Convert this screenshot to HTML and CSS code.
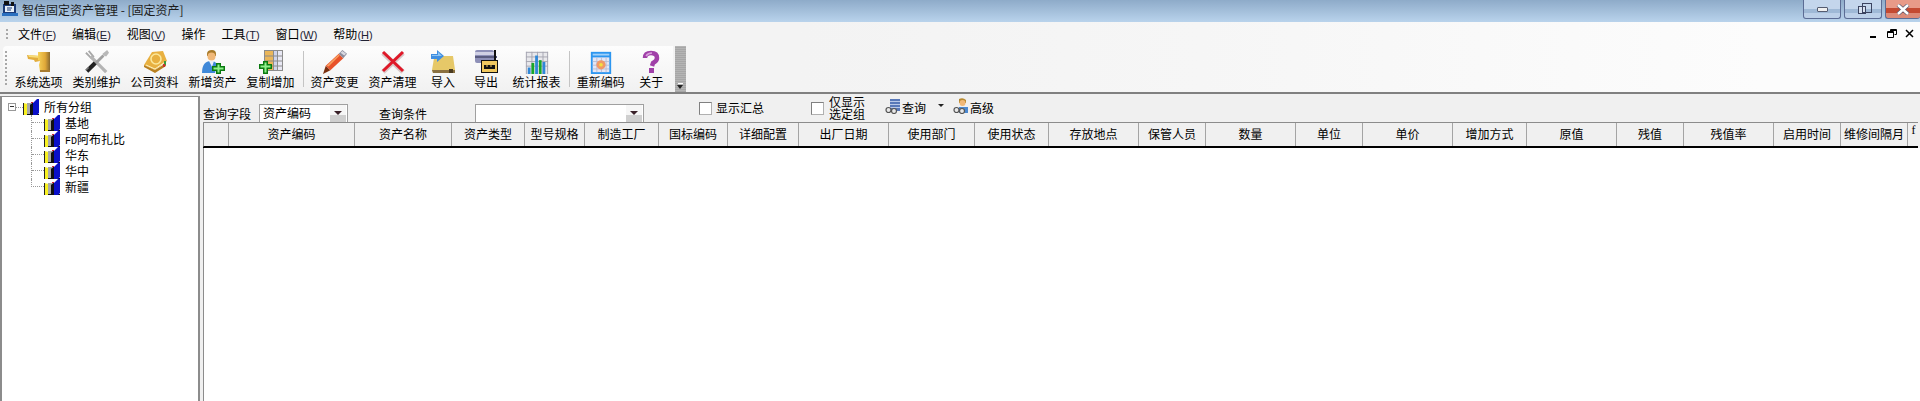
FILE: index.html
```html
<!DOCTYPE html>
<html lang="zh-CN">

<head>
    <meta charset="UTF-8">
    <title>智信固定资产管理 - [固定资产]</title>
    <link rel="stylesheet" href="styles.css">
</head>

<body>
    <svg class="defs" width="0" height="0">
        <defs>
            <linearGradient id="gold" x1="0" x2="1" y1="0" y2="0">
                <stop offset="0" stop-color="#f6d25a"/>
                <stop offset="0.6" stop-color="#e0a838"/>
                <stop offset="1" stop-color="#8a6a30"/>
            </linearGradient>
            <symbol id="i-hammer" viewBox="0 0 24 24">
                <path d="M0 5 L13 6 L13 11 L8 12 L7 10 L1 9 Z" fill="#e2ad3e"/>
                <path d="M1 5 L13 6 L13 8 L2 7 Z" fill="#f7dd7a"/>
                <path d="M11 2 H23 V22 H13 L12 15 L13 11 L11 10 Z" fill="url(#gold)"/>
                <path d="M13 20 H23 V22 H13 Z" fill="#a87c30"/>
            </symbol>
            <symbol id="i-tools" viewBox="0 0 26 26">
                <path d="M4 1 L9 7 L7 9 L1 3" fill="none" stroke="#a8a8a8" stroke-width="2"/>
                <path d="M6 7 L23 24" stroke="#b4b4b4" stroke-width="3.5"/>
                <path d="M24 0 L26 3 L23 7 L20 6 L19 4 Z" fill="#b8b8b8"/>
                <path d="M20 6 L11 15" stroke="#a0a0a0" stroke-width="3"/>
                <path d="M11 14 L2 23" stroke="#222" stroke-width="4.5"/>
                <path d="M4 19 L1 22" stroke="#777" stroke-width="1.5"/>
            </symbol>
            <symbol id="i-book" viewBox="0 0 24 24">
                <path d="M1 15 L9 2 L20 1 L24 11 L12 20 Z" fill="#e8b040"/>
                <path d="M1 15 L12 20 L23 13 L23 16 L12 23 L1 17 Z" fill="#b98020"/>
                <circle cx="13" cy="9" r="5" fill="none" stroke="#fbe79a" stroke-width="1.6"/>
                <path d="M3 15 L12 19 L22 12" fill="none" stroke="#fff3c0"/>
                <path d="M22 11 V15" stroke="#3a9a3a" stroke-width="2"/>
                <path d="M21 14 V17" stroke="#c83030" stroke-width="2"/>
            </symbol>
            <symbol id="i-user-add" viewBox="0 0 24 24">
                <path d="M6 4 Q6 0 11 0 Q15 0 15 4 L15 6 H6 Z" fill="#a87a28"/>
                <circle cx="10.500" cy="6.500" r="4" fill="#f0b878"/>
                <path d="M1 23 Q1 11 10 11 Q15 11 16 15 L14 23 Z" fill="#3f88d8"/>
                <path d="M8 11 L11 17 L13 11 Z" fill="#e8eef8"/>
                <path d="M15 13 H20 V16 H24 V21 H20 V24 H15 V21 H11 V16 H15 Z" fill="#0a7a10"/>
                <path d="M16.500 14.500 H18.500 V17.500 H22.500 V19.500 H18.500 V22.500 H16.500 V19.500 H12.500 V17.500 H16.500 Z" fill="#8ef08a"/>
            </symbol>
            <symbol id="i-copy-add" viewBox="0 0 24 24">
                <rect x="5" y="0" width="19" height="21" fill="#8c8c8c"/>
                <rect x="6" y="1" width="8" height="19" fill="#eab65a"/>
                <rect x="15" y="1" width="3" height="19" fill="#cfd4ec"/>
                <rect x="19" y="1" width="4" height="19" fill="#e8e8f4"/>
                <path d="M6 6 H23 M6 11 H23 M6 16 H23" stroke="#8c8c8c"/>
                <path d="M4 11 H9 V14 H13 V19 H9 V24 H4 V19 H0 V14 H4 Z" fill="#0a7a10"/>
                <path d="M5.500 12.500 H7.500 V15.500 H11.500 V17.500 H7.500 V22.500 H5.500 V17.500 H1.500 V15.500 H5.500 Z" fill="#8ef08a"/>
            </symbol>
            <symbol id="i-pen" viewBox="0 0 26 26">
                <path d="M0 26 L3 17 L8 22 Z" fill="#7a3010"/>
                <path d="M3 17 L17 4 L22 9 L8 22 Z" fill="#e8522a"/>
                <path d="M4 17 L17 5 L18 6 L6 18 Z" fill="#f8a060"/>
                <path d="M17 4 L21 0 L26 4 L22 9 Z" fill="#8c8c9c"/>
                <path d="M21 1 L25 4 L23 6 L19 3 Z" fill="#d8d8e0"/>
            </symbol>
            <symbol id="i-cross" viewBox="0 0 24 24">
                <path d="M2 3 L22 22 M22 3 L2 22" stroke="#d8c8c8" stroke-width="5"/>
                <path d="M2 2 L22 21 M22 2 L2 21" stroke="#e01828" stroke-width="3"/>
            </symbol>
            <symbol id="i-import" viewBox="0 0 24 24">
                <path d="M1 20 L3 8 H10 L12 6 H22 L24 20 V23 H2 Z" fill="#e6c868"/>
                <path d="M1 20 H24 V23 H2 Z" fill="#8a7040"/>
                <path d="M18 19 H22 V23 H18 Z" fill="#4a3a20"/>
                <path d="M0 4 H6 V0 L13 6 L6 12 V9 H0 Z" fill="#3f8ee0"/>
                <path d="M1 5 H7 V2 L11 6 L1 6 Z" fill="#8cc4f4"/>
            </symbol>
            <symbol id="i-export" viewBox="0 0 24 24">
                <rect x="1" y="0" width="19" height="13" rx="2" fill="#8e90b8"/>
                <rect x="1" y="2" width="20" height="3" fill="#d0d0e4"/>
                <rect x="1" y="6" width="22" height="2" fill="#5a5c80"/>
                <path d="M20 0 H22 V10 H20 Z" fill="#111"/>
                <rect x="7" y="10" width="17" height="13" fill="#111"/>
                <rect x="8" y="11" width="15" height="11" fill="#f0c860"/>
                <rect x="10" y="15" width="11" height="4" fill="#111"/>
                <path d="M12 16 H14 M16 16 H18" stroke="#f0c860"/>
            </symbol>
            <symbol id="i-chart" viewBox="-1 -2 26 26">
                <rect x="0" y="0" width="24" height="24" fill="#e8e8ec"/>
                <path d="M0 .5 H24 M0 5.500 H24 M0 10.500 H24 M0 15.500 H24 M.5 0 V24 M6.500 0 V24 M12.500 0 V24 M18.500 0 V24 M23.500 0 V24" stroke="#a4a4b0"/>
                <rect x="2" y="17" width="3" height="7" fill="#3088d8"/>
                <rect x="6" y="12" width="3" height="12" fill="#18a828"/>
                <rect x="10" y="4" width="3" height="20" fill="#3088d8"/>
                <rect x="14" y="9" width="3" height="15" fill="#18a828"/>
                <rect x="18" y="11" width="3" height="13" fill="#3088d8"/>
            </symbol>
            <symbol id="i-recode" viewBox="-1 -2 26 26">
                <rect x="1" y="0" width="22" height="24" fill="#2c96f0"/>
                <rect x="3" y="6" width="18" height="16" fill="#e4e6f4"/>
                <path d="M3 10.500 H21 M3 14.500 H21 M3 18.500 H21 M7.500 6 V22 M12.500 6 V22 M17.500 6 V22" stroke="#b8bcd4"/>
                <rect x="3" y="2" width="18" height="2" fill="#9ed0fa"/>
                <circle cx="12" cy="14" r="5" fill="#f09868"/>
                <circle cx="12" cy="14" r="2" fill="#f4e040"/>
            </symbol>
            <symbol id="i-help" viewBox="0 0 24 24">
                <path d="M6 8 Q6 3 12 3 Q18 3 18 8 Q18 11 14 13 L13 16" fill="none" stroke="#a040a8" stroke-width="4.500"/>
                <path d="M7 6 Q9 3 13 3" fill="none" stroke="#d8a0dc" stroke-width="1.500"/>
                <rect x="10" y="18" width="5" height="5" fill="#a040a8"/>
            </symbol>
            <symbol id="i-group" viewBox="0 0 16 16">
                <path d="M0 5 L4 1 L4 16 H0 Z" fill="#f8f020"/>
                <path d="M0 4 L4 0 L8 1 L5 5 Z" fill="#fff"/>
                <path d="M0 4 V16 H1 V4 Z" fill="#222"/>
                <rect x="4" y="4" width="4" height="12" fill="#a8a8a8"/>
                <rect x="4" y="15" width="12" height="1" fill="#111"/>
                <path d="M7 6 L10 3 L10 16 H7 Z" fill="#111"/>
                <path d="M10 4 L14 0 H16 V14 L14 16 H10 Z" fill="#0a10c8"/>
                <path d="M8 3 H10 V4 H8 Z" fill="#d02030"/>
            </symbol>
            <symbol id="i-app" viewBox="0 0 16 16">
                <rect x="1" y="3" width="13" height="10" fill="#1a3a78"/>
                <rect x="3" y="5" width="9" height="6" fill="#e8f0f8"/>
                <path d="M2 0 H7 V4 H2 Z" fill="#111"/>
                <path d="M9 1 H12 V5 H9 Z" fill="#111"/>
                <path d="M0 12 H16 V15 H0 Z" fill="#2a70c0"/>
                <path d="M5 7 H10 M5 9 H9" stroke="#1a3a78"/>
            </symbol>
            <symbol id="i-find" viewBox="0 0 16 16">
                <path d="M5 1 H15 V13 H5 Z" fill="#5878b8"/>
                <path d="M5 3.500 H15 M5 6.500 H15 M5 9.500 H15" stroke="#b8c8e8"/>
                <circle cx="3.500" cy="12" r="2.500" fill="#e8e8e8" stroke="#555" stroke-width="1.200"/>
                <circle cx="9" cy="13" r="2.500" fill="#e8e8e8" stroke="#555" stroke-width="1.200"/>
            </symbol>
            <symbol id="i-find-user" viewBox="0 0 16 16">
                <path d="M6 1 Q10 -1 13 2 L13 5 H6 Z" fill="#b88a30"/>
                <circle cx="9.500" cy="5" r="3" fill="#f0b878"/>
                <path d="M6 9 H15 V15 H6 Z" fill="#4a88d0"/>
                <circle cx="3.500" cy="12" r="2.500" fill="#e8e8e8" stroke="#555" stroke-width="1.200"/>
                <circle cx="9" cy="13" r="2.500" fill="#e8e8e8" stroke="#555" stroke-width="1.200"/>
            </symbol>
        </defs>
    </svg>

    <header class="titlebar">
        <svg class="app_icon"><use href="#i-app"/></svg>
        <span class="title_text">智信固定资产管理 - [固定资产]</span>
        <div class="win_buttons">
            <span class="win_btn"><i class="win_min"></i></span>
            <span class="win_btn"><i class="win_restore"></i></span>
            <span class="win_btn win_close">
                <svg width="14" height="11" viewBox="0 0 14 11"><path d="M2 1 L12 10 M12 1 L2 10" stroke="#5a5a70" stroke-width="4"/><path d="M2 1 L12 10 M12 1 L2 10" stroke="#fff" stroke-width="2.500"/></svg>
            </span>
        </div>
    </header>

    <div class="bands">
        <nav class="menubar">
            <span class="grip"></span>
            <a class="menu_item">文件<span class="key">(<u>F</u>)</span></a>
            <a class="menu_item">编辑<span class="key">(<u>E</u>)</span></a>
            <a class="menu_item">视图<span class="key">(<u>V</u>)</span></a>
            <a class="menu_item">操作</a>
            <a class="menu_item">工具<span class="key">(<u>T</u>)</span></a>
            <a class="menu_item">窗口<span class="key">(<u>W</u>)</span></a>
            <a class="menu_item">帮助<span class="key">(<u>H</u>)</span></a>
            <div class="mdi_buttons">
                <svg width="10" height="10" viewBox="0 0 10 10"><path d="M1 8 H7" stroke="#000" stroke-width="2"/></svg>
                <svg width="10" height="10" viewBox="0 0 10 10"><path d="M3.500 2.500 V.5 H9.500 V5.500 H7.500 M.5 2.500 H6.500 V8.500 H.5 Z M.5 3.500 H6.500 M3.500 1.500 H9.500" fill="none" stroke="#000"/></svg>
                <svg width="10" height="10" viewBox="0 0 10 10"><path d="M1 1 L8 8 M8 1 L1 8" stroke="#000" stroke-width="1.500"/></svg>
            </div>
        </nav>

        <div class="toolbar_row">
            <div class="toolbar">
                <span class="grip tool_grip"></span>
                <button class="tool"><svg class="tool_icon"><use href="#i-hammer"/></svg>系统选项</button>
                <button class="tool"><svg class="tool_icon"><use href="#i-tools"/></svg>类别维护</button>
                <button class="tool"><svg class="tool_icon"><use href="#i-book"/></svg>公司资料</button>
                <button class="tool"><svg class="tool_icon"><use href="#i-user-add"/></svg>新增资产</button>
                <button class="tool"><svg class="tool_icon"><use href="#i-copy-add"/></svg>复制增加</button>
                <span class="tool_sep"></span>
                <button class="tool"><svg class="tool_icon"><use href="#i-pen"/></svg>资产变更</button>
                <button class="tool"><svg class="tool_icon"><use href="#i-cross"/></svg>资产清理</button>
                <button class="tool"><svg class="tool_icon"><use href="#i-import"/></svg>导入</button>
                <button class="tool"><svg class="tool_icon"><use href="#i-export"/></svg>导出</button>
                <button class="tool"><svg class="tool_icon"><use href="#i-chart"/></svg>统计报表</button>
                <span class="tool_sep"></span>
                <button class="tool"><svg class="tool_icon"><use href="#i-recode"/></svg>重新编码</button>
                <button class="tool"><svg class="tool_icon"><use href="#i-help"/></svg>关于</button>
            </div>
            <div class="toolbar_end"><span class="end_arrow"></span></div>
        </div>
    </div>

    <main class="workspace">
        <aside class="side_panel">
            <div class="tree">
                <div class="tree_root">
                    <span class="expander"></span>
                    <span class="root_dash"></span>
                    <svg class="group_icon"><use href="#i-group"/></svg>
                    <span class="node_text">所有分组</span>
                </div>
                <ul class="tree_list">
                    <li class="tree_node"><span class="branch"></span><svg class="group_icon"><use href="#i-group"/></svg><span class="node_text">基地</span></li>
                    <li class="tree_node"><span class="branch"></span><svg class="group_icon"><use href="#i-group"/></svg><span class="node_text"><span class="latin">FD</span>阿布扎比</span></li>
                    <li class="tree_node"><span class="branch"></span><svg class="group_icon"><use href="#i-group"/></svg><span class="node_text">华东</span></li>
                    <li class="tree_node"><span class="branch"></span><svg class="group_icon"><use href="#i-group"/></svg><span class="node_text">华中</span></li>
                    <li class="tree_node"><span class="branch"></span><svg class="group_icon"><use href="#i-group"/></svg><span class="node_text">新疆</span></li>
                </ul>
            </div>
        </aside>

        <section class="content">
            <div class="query_bar">
                <label class="query_label">查询字段</label>
                <div class="combo combo_field"><span>资产编码</span><b class="combo_btn"><i></i></b></div>
                <label class="query_label label_cond">查询条件</label>
                <div class="combo combo_cond"><span></span><b class="combo_btn"><i></i></b></div>
                <span class="check check_total"></span>
                <span class="check_text">显示汇总</span>
                <span class="check check_sel"></span>
                <span class="check_text two_lines">仅显示<br>选定组</span>
                <svg class="query_icon first_icon"><use href="#i-find"/></svg>
                <span class="query_text">查询</span>
                <span class="small_arrow"></span>
                <svg class="query_icon second_icon"><use href="#i-find-user"/></svg>
                <span class="query_text">高级</span>
            </div>

            <div class="grid_head">
                <span></span>
                <span>资产编码</span>
                <span>资产名称</span>
                <span>资产类型</span>
                <span>型号规格</span>
                <span>制造工厂</span>
                <span>国标编码</span>
                <span>详细配置</span>
                <span>出厂日期</span>
                <span>使用部门</span>
                <span>使用状态</span>
                <span>存放地点</span>
                <span>保管人员</span>
                <span>数量</span>
                <span>单位</span>
                <span>单价</span>
                <span>增加方式</span>
                <span>原值</span>
                <span>残值</span>
                <span>残值率</span>
                <span>启用时间</span>
                <span>维修间隔月</span>
                <span class="cut_col">f</span>
            </div>
            <div class="grid_body"></div>
        </section>
    </main>
</body>

</html>
```

FILE: styles.css
```css
* {
    box-sizing: border-box;
}

html, body {
    margin: 0;
    height: 401px;
    overflow: hidden;
}

body {
    display: flex;
    flex-direction: column;
    background: #f0f0f0;
    color: #000;
    font-family: "Noto Sans CJK SC", "Liberation Sans", sans-serif;
    font-size: 12px;
    line-height: 16px;
}

.defs {
    position: absolute;
}

/* title bar */
.titlebar {
    display: flex;
    align-items: flex-start;
    height: 22px;
    padding-left: 2px;
    background: linear-gradient(#8eabc9, #b9d3ec);
}

.app_icon {
    width: 16px;
    height: 16px;
    margin-top: 1px;
}

.title_text {
    margin: 2px 0 0 4px;
    color: #1c1c1c;
}

.win_buttons {
    display: flex;
    gap: 3px;
    margin-left: auto;
}

.win_btn {
    display: flex;
    align-items: center;
    justify-content: center;
    width: 38px;
    height: 19px;
    border: 1px solid #5c6c94;
    border-top: 0;
    border-radius: 0 0 3px 3px;
    background: linear-gradient(#c4d6ec 0 50%, #9fb9d6 50% 75%, #bcd0e8 75%);
}

.win_close {
    width: 35px;
    border-right: 0;
    background: linear-gradient(#e89a88 0 45%, #c44a32 45% 75%, #dc8a78 75%);
}

.win_min {
    display: block;
    width: 11px;
    height: 5px;
    border: 1px solid #555c70;
    border-radius: 1px;
    background: #f0f0f0;
}

.win_restore {
    display: block;
    position: relative;
    width: 8px;
    height: 8px;
    margin: 2px 0 0 -3px;
    border: 1px solid #3c4460;
    background: #d8e2f0;
}

.win_restore::after {
    content: "";
    position: absolute;
    left: 3px;
    top: -4px;
    width: 8px;
    height: 8px;
    border: 1px solid #3c4460;
}

/* menu + toolbar bands */
.bands {
    background: linear-gradient(90deg, #f3f3f3 0 800px, #f6f6f6 1200px, #fcfcfc 1760px);
    border-bottom: 2px solid #808080;
}

.menubar {
    display: flex;
    align-items: center;
    height: 24px;
    padding-left: 6px;
}

.grip {
    width: 2px;
    height: 10px;
    margin-right: 2px;
    background: repeating-linear-gradient(#a8a8a8 0 2px, transparent 2px 4px);
}

.menu_item {
    padding: 0 8px;
    white-space: nowrap;
}

.key {
    font-family: "Liberation Sans", sans-serif;
    font-size: 11px;
    color: #223;
}

.latin {
    font-family: "Liberation Mono", monospace;
    font-size: 10px;
}

.mdi_buttons {
    display: flex;
    gap: 8px;
    margin-left: auto;
    padding-right: 5px;
}

.toolbar_row {
    display: flex;
    height: 46px;
    padding-left: 3px;
}

.toolbar {
    display: flex;
    align-items: stretch;
    padding-left: 2px;
    border-radius: 4px 0 0 0;
    background: linear-gradient(#fdfdfd, #f1f1f1);
}

.tool_grip {
    align-self: flex-start;
    height: 36px;
    margin: 5px 2.500px 0 0;
}

.tool {
    display: flex;
    flex-direction: column;
    align-items: center;
    min-width: 43px;
    padding: 4px 5px 0;
    border: 0;
    background: none;
    color: #000;
    font: inherit;
    white-space: nowrap;
}

.tool_icon {
    width: 24px;
    height: 24px;
    flex: none;
}

.tool_sep {
    align-self: center;
    width: 1px;
    height: 36px;
    margin: 0 2px 0 3px;
    background: #c4c4c4;
}

.toolbar_end {
    position: relative;
    width: 11px;
    margin-left: 2px;
    background: repeating-linear-gradient(#b4b4b4 0 1px, #a6a6a6 1px 2px);
}

.end_arrow {
    position: absolute;
    left: 2px;
    bottom: 3px;
    border: 3px solid transparent;
    border-top: 4px solid #222;
    border-bottom: 0;
}

.end_arrow::before {
    content: "";
    position: absolute;
    left: -2px;
    top: -6px;
    width: 5px;
    height: 1px;
    background: #fff;
}

/* main area */
.workspace {
    display: flex;
    flex: 1;
    min-height: 0;
}

.side_panel {
    width: 200px;
    padding-top: 2px;
}

.tree {
    height: 100%;
    padding: 2px 0 0 8px;
    border: 2px solid #8c8c8c;
    border-width: 1px 2px 0 2px;
    background: #fff;
}

.tree_root {
    display: flex;
    align-items: center;
    height: 16px;
    margin-left: -2px;
}

.expander {
    position: relative;
    width: 8px;
    height: 8px;
    border: 1px solid #999;
}

.expander::after {
    content: "";
    position: absolute;
    left: 1px;
    top: 2px;
    width: 4px;
    height: 1px;
    background: #333;
}

.root_dash {
    width: 7px;
    border-bottom: 1px dotted #999;
}

.group_icon {
    width: 16px;
    height: 16px;
    flex: none;
}

.node_text {
    margin-left: 5px;
    white-space: nowrap;
}

.tree_list {
    margin: 0 0 0 21px;
    padding: 0;
    list-style: none;
}

.tree_node {
    display: flex;
    height: 16px;
    border-left: 1px dotted #999;
}

.tree_node:last-child {
    border-left-color: transparent;
}

.branch {
    width: 12px;
    height: 8px;
    border-bottom: 1px dotted #999;
}

.tree_node:last-child .branch {
    width: 13px;
    margin-left: -1px;
    border-left: 1px dotted #999;
}

.content {
    display: flex;
    flex-direction: column;
    flex: 1;
    min-width: 0;
    margin-left: 3px;
}

/* query bar */
.query_bar {
    display: flex;
    align-items: flex-start;
    flex: none;
    height: 28px;
}

.query_label {
    width: 48px;
    margin-top: 12px;
    white-space: nowrap;
}

.label_cond {
    margin-left: 31px;
}

.combo {
    display: flex;
    justify-content: space-between;
    height: 18px;
    margin-top: 10px;
    padding-left: 3px;
    border: 1px solid #a0a0a0;
    border-bottom: 0;
    background: #fff;
    line-height: 15px;
}

.combo_field {
    width: 89px;
    margin-left: 8px;
}

.combo_cond {
    width: 169px;
    margin-left: 48px;
}

.combo_btn {
    position: relative;
    width: 16px;
    margin-right: 1px;
    background: linear-gradient(#f6f6f6 0 60%, #cfcfcf 60%);
}

.combo_btn i {
    position: absolute;
    left: 4px;
    top: 6px;
    border: 4px solid transparent;
    border-top: 4px solid #3a2028;
    border-bottom: 0;
}

.check {
    width: 13px;
    height: 13px;
    margin-top: 8px;
    border: 1px solid #808080;
    border-right-color: #b0b0b0;
    border-bottom-color: #b0b0b0;
    background: #fff;
}

.check_total {
    margin-left: 55px;
}

.check_sel {
    margin-left: 47px;
}

.check_text {
    margin: 6px 0 0 4px;
    white-space: nowrap;
}

.two_lines {
    margin: 2px 0 0 5px;
    line-height: 12px;
}

.query_icon {
    width: 16px;
    height: 16px;
    margin-top: 4px;
}

.first_icon {
    margin-left: 20px;
}

.second_icon {
    margin-left: 9px;
}

.query_text {
    margin: 6px 0 0 1px;
    width: 26px;
}

.small_arrow {
    margin: 10px 0 0 10px;
    border: 3px solid transparent;
    border-top: 3px solid #222;
    border-bottom: 0;
}

/* grid */
.grid_head {
    display: grid;
    grid-template-columns: 25px 126px 97px 73px 60px 74px 69px 71px 90px 86px 74px 90px 67px 90px 67px 90px 74px 90px 67px 90px 67px 67px 11px;
    flex: none;
    height: 25px;
    margin-right: 2px;
    border-top: 1px solid #8c8c8c;
    border-left: 1px solid #8c8c8c;
    border-bottom: 1px solid #000;
    box-shadow: 0 1px 0 #000;
    background: #f0f0f0;
}

.grid_head span {
    border-right: 1px solid #a4a4a4;
    line-height: 22px;
    text-align: center;
    white-space: nowrap;
    overflow: hidden;
}

.grid_head .cut_col {
    border-right: 0;
    font-family: "Liberation Serif", serif;
    line-height: 14px;
}

.grid_body {
    flex: 1;
    margin-top: 1px;
    border-left: 1px solid #8c8c8c;
    background: #fff;
}
```
